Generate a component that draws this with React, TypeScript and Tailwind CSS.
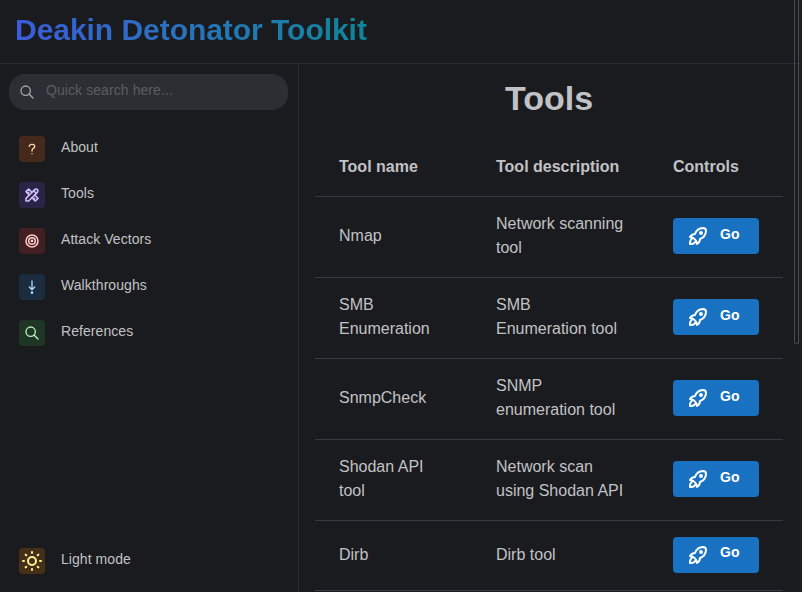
import type { ReactNode } from "react";
import { TbQuestionMark, TbTools, TbTarget, TbSearch, TbSun, TbRocket } from "react-icons/tb";

function StepDown() {
  return (
    <svg width="16" height="16" viewBox="0 0 24 24" fill="none" stroke="currentColor" strokeWidth="2" strokeLinecap="round" strokeLinejoin="round">
      <path d="M12 3v13M8 12l4 4 4-4" />
      <circle cx="12" cy="20.5" r="1" fill="currentColor" />
    </svg>
  );
}

function NavItem({ icon, label, tone }: { icon: ReactNode; label: string; tone: string }) {
  return (
    <div className="flex h-[46px] items-center gap-4 pl-[19px]">
      <div className={"flex size-[26px] items-center justify-center rounded " + tone}>{icon}</div>
      <span className="pb-[4px] text-sm leading-[22px] tracking-[0.06px]">{label}</span>
    </div>
  );
}

const rows = [
  ["Nmap", "Network scanning tool"],
  ["SMB Enumeration", "SMB Enumeration tool"],
  ["SnmpCheck", "SNMP enumeration tool"],
  ["Shodan API tool", "Network scan using Shodan API"],
  ["Dirb", "Dirb tool"],
];

const columns = "grid grid-cols-[157px_177px_134px] border-b border-[#373a40]";

export default function App() {
  return (
    <div className="relative flex h-[592px] w-[802px] overflow-hidden bg-[#1a1b1e] font-['Liberation_Sans',Arial,sans-serif] text-[#c1c2c5]">
      <div className="flex w-[799px] flex-col">
        <header className="flex h-16 shrink-0 items-center border-b border-[#2c2e33] pb-1 pl-[15px]">
          <h1 className="bg-linear-to-r from-[#3b5bdb] to-[#0c8599] bg-clip-text text-[30px] leading-[40px] font-bold tracking-[-0.04px] text-transparent">
            Deakin Detonator Toolkit
          </h1>
        </header>
        <div className="flex min-h-0 flex-1">
          <nav className="flex w-[299px] shrink-0 flex-col border-r border-[#2c2e33] pt-[10px] pb-[8px]">
            <div className="ml-[9px] flex h-9 w-[279px] items-center rounded-[16px] bg-[#2c2e33] pl-[10px]">
              <TbSearch size={16} className="text-[#a6a7ab]" />
              <span className="ml-[11px] pb-[5px] text-sm tracking-[0.08px] text-[#595e64]">Quick search here...</span>
            </div>
            <div className="mt-4">
              <NavItem label="About" tone="bg-[#45291c] text-[#ffd8a8]" icon={<TbQuestionMark size={16} />} />
              <NavItem label="Tools" tone="bg-[#2b2446] text-[#d0bfff]" icon={<TbTools size={16} style={{ strokeWidth: 2.3 }} />} />
              <NavItem label="Attack Vectors" tone="bg-[#431f22] text-[#ffc9c9]" icon={<TbTarget size={16} style={{ strokeWidth: 2.3 }} />} />
              <NavItem label="Walkthroughs" tone="bg-[#1b2c3f] text-[#a5d8ff]" icon={<StepDown />} />
              <NavItem label="References" tone="bg-[#1f3525] text-[#b2f2bb]" icon={<TbSearch size={16} />} />
            </div>
            <div className="mt-auto">
              <NavItem label="Light mode" tone="bg-[#453017] text-[#ffec99]" icon={<TbSun size={24} />} />
            </div>
          </nav>
          <main className="w-[484px] shrink-0 overflow-hidden pl-4">
            <h1 className="pt-[12px] text-center text-[34px] leading-[44px] font-bold">Tools</h1>
            <div className={columns + " mt-[20px] h-[57px] items-center pb-[3px] text-base font-bold"}>
              <span className="pl-6">Tool name</span>
              <span className="pl-6">Tool description</span>
              <span className="pl-6">Controls</span>
            </div>
            {rows.map(([name, description]) => (
              <div key={name} className={columns + " min-h-[70px] items-center pt-[15px] pb-[17px] text-base leading-6"}>
                <span className="pr-6 pl-6">{name}</span>
                <span className="pr-6 pl-6">{description}</span>
                <div className="pr-6 pl-6">
                  <button className="flex h-9 w-[86px] items-center rounded bg-[#1971c2] pl-[13px] text-sm font-bold text-white">
                    <TbRocket size={24} />
                    <span className="ml-[10px] pb-[5px]">Go</span>
                  </button>
                </div>
              </div>
            ))}
          </main>
        </div>
      </div>
      <div className="absolute top-0 left-[794px] h-[344px] w-[5px] rounded-b-[3px] border-x border-b border-[#4a4a4c]" />
      <div className="w-[3px] bg-[#1c1e26]" />
    </div>
  );
}
